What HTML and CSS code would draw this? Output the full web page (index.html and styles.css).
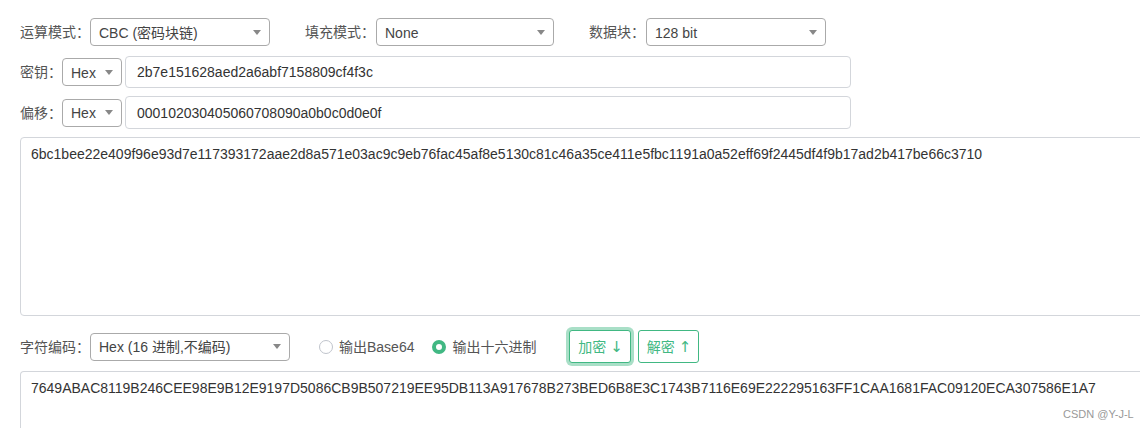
FILE: index.html
```html
<!DOCTYPE html>
<html lang="zh">
<head>
<meta charset="utf-8">
<link rel="stylesheet" href="styles.css">
</head>
<body>
<div class="page">
  <div class="row row-top">
    <span class="label">运算模式：</span>
    <div class="select w180"><span>CBC (密码块链)</span><i class="arrow"></i></div>
    <span class="label gap-left">填充模式：</span>
    <div class="select w178"><span>None</span><i class="arrow"></i></div>
    <span class="label gap-left2">数据块：</span>
    <div class="select w180"><span>128 bit</span><i class="arrow"></i></div>
  </div>

  <div class="row row-field">
    <span class="label">密钥：</span>
    <div class="select small"><span>Hex</span><i class="arrow"></i></div>
    <div class="input">2b7e151628aed2a6abf7158809cf4f3c</div>
  </div>

  <div class="row row-field second">
    <span class="label">偏移：</span>
    <div class="select small"><span>Hex</span><i class="arrow"></i></div>
    <div class="input">000102030405060708090a0b0c0d0e0f</div>
  </div>

  <div class="textarea src">6bc1bee22e409f96e93d7e117393172aae2d8a571e03ac9c9eb76fac45af8e5130c81c46a35ce411e5fbc1191a0a52eff69f2445df4f9b17ad2b417be66c3710</div>

  <div class="row row-actions">
    <span class="label">字符编码：</span>
    <div class="select w200"><span>Hex (16 进制,不编码)</span><i class="arrow"></i></div>
    <label class="radio first"><i class="dot"></i><span>输出Base64</span></label>
    <label class="radio checked"><i class="dot"></i><span>输出十六进制</span></label>
    <button class="btn focused">加密 <span class="ar">↓</span></button>
    <button class="btn">解密 <span class="ar">↑</span></button>
  </div>

  <div class="textarea out">7649ABAC8119B246CEE98E9B12E9197D5086CB9B507219EE95DB113A917678B273BED6B8E3C1743B7116E69E222295163FF1CAA1681FAC09120ECA307586E1A7</div>
</div>
<div class="watermark">CSDN @Y-J-L</div>
</body>
</html>
```

FILE: styles.css
```css
html, body {
  margin: 0;
  padding: 0;
  background: #fff;
  overflow: hidden;
  width: 1140px;
  height: 428px;
}
body {
  font-family: "Liberation Sans", "Noto Sans CJK SC", sans-serif;
  font-size: 14px;
  color: #333;
  position: relative;
}
.page {
  padding: 18px 0 0 20px;
}
.row {
  display: flex;
  align-items: center;
}
.label {
  color: #555;
  font-size: 14px;
  line-height: 20px;
  white-space: nowrap;
}
.row-top .label:first-child { width: 70px; }
.gap-left { margin-left: 35px; width: 71px; }
.gap-left2 { margin-left: 35px; width: 57px; }

.select {
  box-sizing: border-box;
  height: 28px;
  border: 1px solid #aaa;
  border-radius: 4px;
  display: flex;
  align-items: center;
  justify-content: space-between;
  padding: 0 8px 0 8px;
  color: #444;
  font-size: 14px;
  line-height: 20px;
  white-space: nowrap;
  background: #fff;
}
.select span { padding-top: 1px; }
.w180 { width: 180px; }
.w178 { width: 178px; }
.w200 { width: 200px; }
.arrow {
  width: 0;
  height: 0;
  border-left: 4px solid transparent;
  border-right: 4px solid transparent;
  border-top: 5px solid #888;
}
.row-top { height: 28px; }

.row-field {
  margin-top: 10px;
  height: 32px;
}
.row-field.second { margin-top: 8px; height: 33px; }
.row-field .label { width: 42px; }
.select.small {
  width: 60px;
  padding: 0 8px 0 8px;
}
.input {
  box-sizing: border-box;
  margin-left: 3px;
  width: 726px;
  height: 100%;
  border: 1px solid #d3d6db;
  border-radius: 4px;
  padding: 0 11px;
  display: flex;
  align-items: center;
  color: #333;
  line-height: 20px;
}

.textarea {
  box-sizing: border-box;
  width: 1128px;
  border: 1px solid #d3d6db;
  border-radius: 4px;
  padding: 6px 10px;
  line-height: 20px;
  color: #333;
  white-space: nowrap;
  overflow: hidden;
}
.textarea.src {
  margin-top: 8px;
  height: 179px;
}
.row-actions {
  margin-top: 14px;
  height: 33px;
}
.row-actions .label { width: 70px; }
.radio {
  display: flex;
  align-items: center;
  color: #555;
  font-size: 14px;
  line-height: 20px;
  white-space: nowrap;
}
.radio.first { margin-left: 29px; }
.radio.checked { margin-left: 18px; }
.dot {
  box-sizing: border-box;
  width: 14px;
  height: 14px;
  border-radius: 50%;
  border: 1px solid #c0c4cc;
  margin-right: 6px;
  background: #fff;
}
.radio.checked .dot {
  border: 4px solid #41b883;
}
.btn {
  box-sizing: border-box;
  height: 33px;
  width: 62px;
  border: 1px solid #41b883;
  border-radius: 3px;
  background: #fff;
  color: #41b883;
  font-family: "Liberation Sans", "Noto Sans CJK SC", sans-serif;
  font-size: 14px;
  line-height: 20px;
  padding: 0;
  margin-left: 7px;
}
.ar {
  font-family: "DejaVu Sans", sans-serif;
  font-size: 15px;
  font-weight: normal;
}
.btn.focused {
  margin-left: 33px;
  box-shadow: 0 0 0 3px rgba(65, 184, 131, 0.45);
}
.btn + .btn { width: 61px; }
.textarea.out {
  margin-top: 8px;
  height: 57px;
  border-bottom: 0;
  border-bottom-left-radius: 0;
  border-bottom-right-radius: 0;
}
.watermark {
  position: absolute;
  left: 1063px;
  top: 407px;
  font-size: 11px;
  line-height: 14px;
  color: #999;
  font-family: "Liberation Sans", sans-serif;
}
```
